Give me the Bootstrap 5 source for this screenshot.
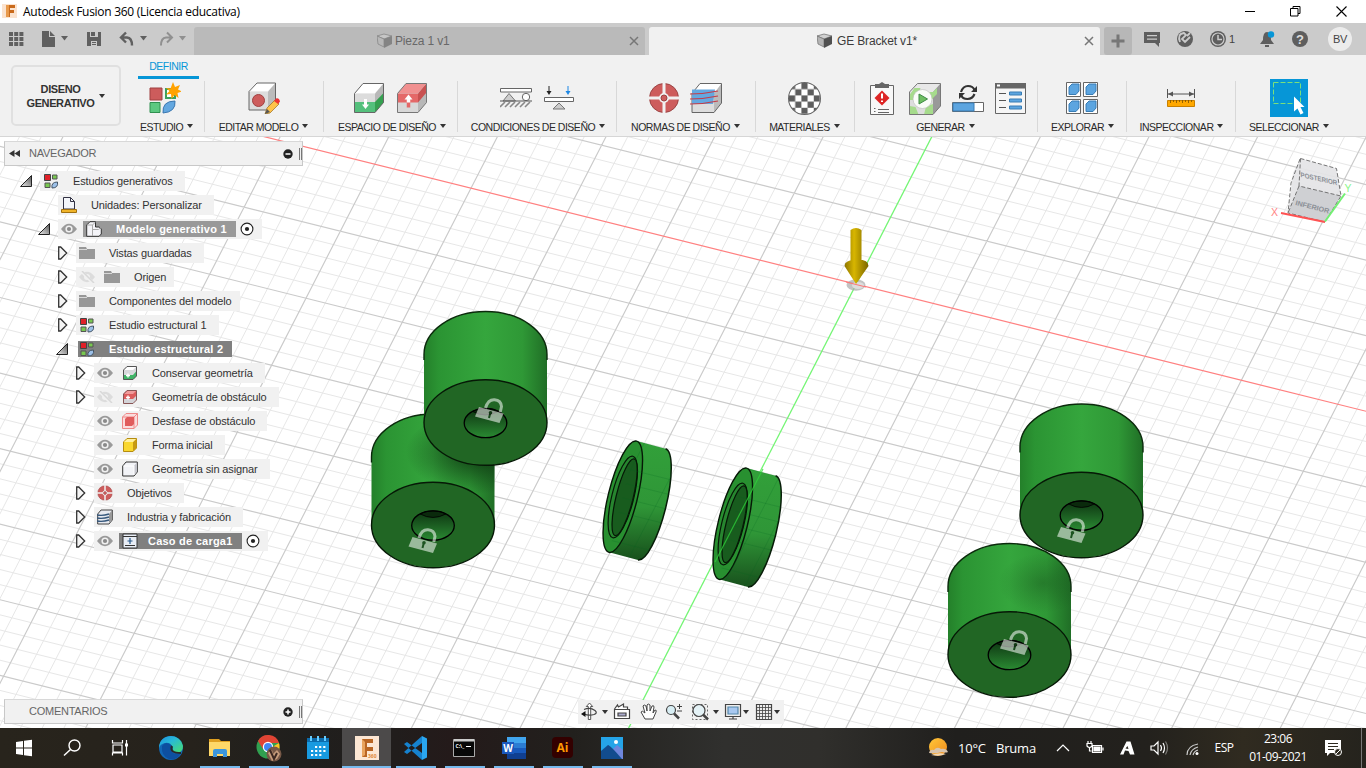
<!DOCTYPE html>
<html lang="es">
<head>
<meta charset="utf-8">
<title>Autodesk Fusion 360</title>
<link href="https://cdn.jsdelivr.net/npm/bootstrap@5.3.0/dist/css/bootstrap.min.css" rel="stylesheet">
<style>
html,body{width:1366px;height:768px;overflow:hidden}
body{font-family:"Liberation Sans",Arial,sans-serif;font-size:11px;color:#333;background:#fff;line-height:1}
svg{display:block;flex:none}
.titlebar{height:23px;background:#fff;color:#000;font:12px/23px "Open Sans","Noto Sans",sans-serif}
.titlebar .app-title{letter-spacing:-.28px;margin-left:5px}
.win-btn{width:46px;height:21px}
.tabstrip{height:32px;background:#cbcbcb;font-size:12px}
.tabstrip-right{width:222px}
.qat{width:194px}
.doc-tab{height:28px;width:451px;margin-top:4px;border-radius:3px 3px 0 0;background:#bababa;color:#686868;letter-spacing:-.15px;padding:0 6px 0 183px}
.doc-tab span{margin-left:2px}
.doc-tab.current{background:#f1f1f1;color:#3c3c3c;margin-left:4px;padding-left:168px}
.doc-tab.current span{margin-left:4px}
.plus-tab{width:28px;height:28px;margin:4px 0 0 4px;background:#b7b7b7;border-radius:3px}
.avatar{width:24px;height:24px;border-radius:50%;background:#ececec;color:#444;font-size:11px;letter-spacing:-.3px}
.ribbon{height:82px;background:#f1f1f1;border-bottom:1px solid #d6d6d6}
.workspace{width:129px}
.workspace-btn{width:110px;height:61px;margin:10px 0 0 11px;border:2px solid #e0e0e0;border-radius:5px;font-weight:700;line-height:14px;letter-spacing:-.4px;color:#333}
.workspace-btn .caret{margin-left:5px}
.tool-group{position:relative;height:81px;padding-top:22px}
.tool-group+.tool-group::before{content:"";position:absolute;left:0;top:26px;height:51px;border-left:1px solid #d8d8d8}
.tool-icons{height:42px}
.tool-label{font-size:10.5px;letter-spacing:-.5px;color:#2a2a2a;white-space:nowrap;line-height:14px;height:14px;margin-top:1px}
.caret{width:0;height:0;border:3.5px solid transparent;border-top:4.5px solid #333;border-bottom:0;display:inline-block}
.tool-label .caret{margin-left:4px;vertical-align:3px}
.g0{width:75px}.g1{width:119px}.g2{width:134px}.g3{width:159px}.g4{width:139px}.g5{width:99px}.g6{width:183px}.g7{width:89px}.g8{width:109px}.g9{width:108px}
.g0 .tool-icons{margin-left:-4px}.g6 .tool-icons{margin-left:4px}.g2 .tool-label{padding-left:4px}.g3 .tool-label{padding-left:3px}.g7 .tool-label,.g8 .tool-label{padding-left:2px}
.g2 .tool-icons{gap:11px}.g3 .tool-icons{gap:12px}.g4 .tool-icons{gap:10px}
.define-tab{position:absolute;left:9px;top:0;width:61px;height:24px;border-bottom:3px solid #0696d7;color:#0696d7;font-size:10.5px;letter-spacing:-.5px;text-align:center;line-height:23px}
.viewport{height:591px;overflow:hidden;background:#fff}
.scene{position:absolute;left:0;top:0}
.browser{width:304px;padding-top:4px}
.panel-bar{width:299px;height:25px;margin-left:4px;background:#f1f1f1;border:1px solid #c8c8c8;border-top-color:#d8d8d8;color:#666;letter-spacing:-.25px}
.browser .panel-bar{margin-bottom:5px;padding-left:4px}
.panel-bar .grip{width:3px;height:12px;border-left:1px solid #777;border-right:1px solid #777;margin-left:6px}
.panel-bar span{margin-left:9px}
.comments .panel-bar span{margin-left:24px}
.tree-row{height:20px;margin-bottom:4px}
.lv0{padding-left:20px}.lv1{padding-left:38px}.lv2{padding-left:56px}.lv3{padding-left:74px}
.twist{width:20px}
.node{height:20px;background:#f1f1f1;padding:0 12px 0 3px;color:#333;letter-spacing:-.13px}
.node .node-text{margin-left:14px;white-space:nowrap}
.eye{margin-right:9px}
.picked{height:16px;background:#808080;color:#fff;font-weight:700;letter-spacing:.23px;padding:0 9px 0 3px;margin-left:-3px}
.picked.soft{background:#999}
.picked.flush{margin-left:-1px;padding-left:1px}
.picked.load .node-text{margin-left:10px}
.comments{position:absolute;left:0;top:562px}
.navtools{position:absolute;left:578px;top:563px;width:206px;height:24px;background:#f1f1f1}
.taskbar{height:40px;background:linear-gradient(90deg,#28241c 0,#26221c 14%,#201f1d 22%,#211d1c 29%,#241a1a 33%,#22201d 42%,#30302e 53%,#302f2c 60%,#201f1d 70%,#23211d 84%,#302b20 91%,#25231d 100%);color:#fff;font-family:"Open Sans","Noto Sans",sans-serif}
.tb{width:49px;height:40px;position:relative}
.tb.sys{width:48px}
.tb.first{margin-left:2px}
.tb.run::after{content:"";position:absolute;left:4.5px;right:4.5px;bottom:0;height:2px;background:#76b9ed}
.tb.on{background:#4c4a4a}.tb.on::after{left:0;right:0}
.tray{width:438px;font-size:12px}
.tray .temp{width:38px;margin-left:9px;font-size:13px;letter-spacing:-.2px}
.tray .sky{width:52px;font-size:13px;letter-spacing:-.2px}
.tray .lang{width:32px;text-align:center;letter-spacing:-.5px}
.tray .clock{width:76px;line-height:18px;letter-spacing:-.5px}
.tray .peek{margin-left:11px}
</style>
</head>
<body>
<svg width="0" height="0" class="position-absolute">
<defs>
<linearGradient id="side" x1="0" x2="1"><stop offset="0" stop-color="#24802a"/><stop offset=".12" stop-color="#2b9433"/><stop offset=".5" stop-color="#35a63d"/><stop offset=".8" stop-color="#2f9836"/><stop offset="1" stop-color="#206e26"/></linearGradient>
<linearGradient id="bore" x1="0" y1="0" x2="0" y2="1"><stop offset="0" stop-color="#0c3410"/><stop offset=".5" stop-color="#1c5e22"/><stop offset="1" stop-color="#2a8a32"/></linearGradient>
<linearGradient id="ring" x1="0" y1="0" x2="0" y2="1"><stop offset="0" stop-color="#32a03a"/><stop offset=".55" stop-color="#2f9637"/><stop offset="1" stop-color="#18501c"/></linearGradient>
<linearGradient id="gold"><stop offset="0" stop-color="#8c7400"/><stop offset=".4" stop-color="#d8b600"/><stop offset="1" stop-color="#7a6500"/></linearGradient>
<radialGradient id="shade"><stop offset="0" stop-color="#08240a" stop-opacity=".85"/><stop offset="1" stop-color="#0c3410" stop-opacity="0"/></radialGradient>
<linearGradient id="tri" x1="0" y1="1" x2="1" y2="0"><stop offset="0" stop-color="#eee"/><stop offset="1" stop-color="#555"/></linearGradient>
<linearGradient id="edgeg" x1="0" y1="0" x2="1" y2="1"><stop offset="0" stop-color="#1d8fe0"/><stop offset=".4" stop-color="#28b8d8"/><stop offset="1" stop-color="#4be06a"/></linearGradient>
<linearGradient id="sun" x1="0" y1="0" x2="1" y2="1"><stop offset="0" stop-color="#ffc83a"/><stop offset="1" stop-color="#f08a1c"/></linearGradient>
<pattern id="check" width="12" height="12" patternUnits="userSpaceOnUse" x="1" y="1"><rect width="12" height="12" fill="#fff"/><path d="M0 0h6v6H0zM6 6h6v6H6z" fill="#5e5e5e"/></pattern>
<symbol id="open" viewBox="0 0 12 12"><path d="M11.5.5V11.5H.5z" fill="url(#tri)" stroke="#222"/></symbol>
<symbol id="shut" viewBox="0 0 12 14"><path d="M2.700 1h2l6 6-6 6h-2z" fill="#f4f4f4" stroke="#333" stroke-width="1.3"/></symbol>
<symbol id="eye" viewBox="0 0 16 12"><path d="M0 6Q4 .8 8 .8T16 6Q12 11.2 8 11.2T0 6z" fill="#9a9a9a"/><circle cx="8" cy="6" r="3.6" fill="#f1f1f1"/><circle cx="8" cy="6" r="2.1" fill="#8a8a8a"/></symbol>
<symbol id="noeye" viewBox="0 0 16 12"><path d="M0 6Q4 .8 8 .8T16 6Q12 11.2 8 11.2T0 6z" fill="#dcdcdc"/><circle cx="8" cy="6" r="3" fill="#f1f1f1"/><path d="M2 0l12 12" stroke="#f1f1f1" stroke-width="3"/><path d="M3 0l12 12" stroke="#d8d8d8" stroke-width="1.5"/></symbol>
<symbol id="folder" viewBox="0 0 16 14"><path d="M0 1h7l1 2h8v10H0z" fill="#989898"/><path d="M0 3.5h8" stroke="#d8d8d8"/></symbol>
<symbol id="study" viewBox="0 0 16 16"><path d="M1.500 1.500h6v6h-6z" fill="#e02028" stroke="#444"/><path d="M9.500 2h4.500v4H9.500z" fill="#78c850" stroke="#555"/><path d="M2 10h5v4.500H2z" fill="#78c850" stroke="#555"/><path d="M9 15q-1-6 5.500-6 1 6-5.500 6z" fill="#9cc0e8" stroke="#456"/></symbol>
<symbol id="radio" viewBox="0 0 14 14"><circle cx="7" cy="7" r="5.900" fill="#fff" stroke="#222" stroke-width="1.100"/><circle cx="7" cy="7" r="2.100" fill="#222"/></symbol>
<symbol id="cgreen" viewBox="0 0 32 32"><path d="M1.500 11.500L10 1.500h20.500L22 11.500z" fill="#fff"/><path d="M22 11.500L30.500 1.500v19L22 30.500z" fill="#b8b8b8"/><path d="M1.500 11.500H22v9H1.500z" fill="#dcdcdc"/><path d="M1.500 20H22v10.500H1.500z" fill="#54c07c"/><path d="M22 20l8.500-9v9.500L22 30.500z" fill="#35a050"/><path d="M1.500 11.500L10 1.500h20.500v19L22 30.500H1.500z" fill="none" stroke="#666"/><path d="M12.500 17v7" stroke="#fff" stroke-width="3"/><path d="M9 22.500h7L12.500 27z" fill="#fff"/></symbol>
<symbol id="cred" viewBox="0 0 32 32"><path d="M1.500 11.500L10 1.500h20.500L22 11.500z" fill="#f09090"/><path d="M22 11.500L30.500 1.500v19L22 30.500z" fill="#b8b8b8"/><path d="M1.500 11.500H22v19H1.500z" fill="#d8d8d8"/><path d="M1.500 11.500H22v9H1.500z" fill="#e46868"/><path d="M22 11.500l8.500-10v9L22 20.500z" fill="#c85050"/><path d="M1.500 11.500L10 1.500h20.500v19L22 30.500H1.500z" fill="none" stroke="#777"/><path d="M12.500 20v5.500" stroke="#e46868" stroke-width="3.500"/><path d="M12.500 20.500V16" stroke="#fff" stroke-width="3.500"/><path d="M8.500 17.500h8L12.500 12.500z" fill="#fff"/></symbol>
<symbol id="sgreen" viewBox="0 0 16 16"><path d="M1.500 5L5 1.500h9.500V11L11 14.500H1.500z" fill="#d8d8dc"/><path d="M2 5l3.500-3H14l-3 3z" fill="#fff"/><path d="M1.500 10H11l3.500-4v5L11 14.500H1.500z" fill="#3fb466"/><path d="M1.500 5L5 1.500h9.500V11L11 14.500H1.500z" fill="none" stroke="#555"/><path d="M6 8.500v4M4 10.500h4" stroke="#fff" stroke-width="1.400"/></symbol>
<symbol id="sred" viewBox="0 0 16 16"><path d="M1.500 5L5 1.500h9.500V11L11 14.500H1.500z" fill="#d4d4d8"/><path d="M1.500 5L5 1.500h9.500v5L11 10H1.500z" fill="#dc5c5c"/><path d="M2 5l3.500-3H14l-3 3z" fill="#f09a9a"/><path d="M1.500 5L5 1.500h9.500V11L11 14.500H1.500z" fill="none" stroke="#855"/><path d="M6 6.500v4M4 8.500h4" stroke="#fff" stroke-width="1.400"/></symbol>
<symbol id="target" viewBox="0 0 32 32"><circle cx="16" cy="16" r="14.500" fill="#cd5c5c" stroke="#9b4444"/><path d="M16 0v32M0 16h32" stroke="#f1f1f1" stroke-width="3"/><circle cx="16" cy="16" r="5" fill="#f1f1f1"/><circle cx="16" cy="16" r="3" fill="#cd5c5c" stroke="#9b4444"/></symbol>
<symbol id="fab" viewBox="0 0 34 32"><path d="M2 11.500L10 1.500h21.500L24 11.500z" fill="#fff"/><path d="M24 11.500l7.500-10V21L24 30.500z" fill="#bbb"/><path d="M2 11.500h22v19H2z" fill="#ddd"/><path d="M2 11.500L10 1.500h21.500V21L24 30.500H2z" fill="none" stroke="#666"/><path d="M2 7.500h23L23 22H2z" fill="#64a8e0"/><path d="M0 12q14 0 28-3M0 17q14 0 28-3M0 22q14 0 28-3" stroke="#c43c48" fill="none" stroke-width="1.200"/></symbol>
<symbol id="cylinder" viewBox="0 0 126 158" overflow="visible"><path d="M1.500 44.500A61.500 43 0 0 1 124.500 44.500V112H1.500z" fill="url(#side)"/><path d="M1.500 50v-5.500A61.500 43 0 0 1 124.500 44.500V50" fill="none" stroke="#0b2a0c" stroke-width="1.400"/></symbol>
<symbol id="face" viewBox="0 0 126 158" overflow="visible"><ellipse cx="63" cy="112.500" rx="61.500" ry="42.800" fill="#216624" stroke="#061806" stroke-width="1.400"/><ellipse cx="63" cy="113" rx="21.300" ry="14.700" fill="url(#bore)"/><path d="M50 101.400A21.300 14.700 0 0 1 76 101.400Q63 108.500 50 101.400z" fill="#0a2a0c" stroke="#000" stroke-width=".8"/><ellipse cx="63" cy="113" rx="21.300" ry="14.700" fill="none" stroke="#000" stroke-width="1.300"/></symbol>
<symbol id="lock" viewBox="0 0 30 30" overflow="visible"><path d="M10.500 10.500Q13 1.800 19.500 2.200T26.500 9L25.300 14.500" fill="none" stroke="#fff" stroke-width="3"/><path d="M4 9.500l24.500 6.500-4 9.500L0 19z" fill="#fff"/><path d="M15.300 15.500l-1.300 5" stroke="#1d4720" stroke-width="2"/><circle cx="15.500" cy="15.300" r="1.800" fill="#1d4720"/></symbol>
<g id="ringpart"><path d="M636.600 441.100l29 7.700A14.600 57.300 13.900 0 1 638 560l-29-7.700z" fill="url(#ring)"/><path d="M665.600 448.800A14.600 57.300 13.900 0 1 638 560" fill="none" stroke="#071c08" stroke-width="1.500"/><ellipse cx="622.800" cy="496.700" rx="14.600" ry="57.300" transform="rotate(13.900 622.800 496.700)" fill="#289030" stroke="#061806" stroke-width="1.400"/><ellipse cx="622.800" cy="497" rx="11" ry="42" transform="rotate(13.900 622.800 497)" fill="#27852f" stroke="#061806" stroke-width="1.200"/><ellipse cx="624.600" cy="497.300" rx="8.500" ry="39.500" transform="rotate(13.900 624.600 497.300)" fill="#185c1e" stroke="#061806" stroke-width="1.200"/></g>
<clipPath id="clipB"><path d="M371.500 457A61.500 43 0 0 1 494.500 457V525H371.500z"/></clipPath>
<clipPath id="clipD"><path d="M948 587A61.500 43 0 0 1 1071 587V655H948z"/></clipPath>
<clipPath id="clipR"><path d="M636.600 441.100l29 7.700A14.600 57.300 13.900 0 1 638 560l-29-7.700zM746.600 468.100l29 7.700A14.600 57.300 13.900 0 1 748 587l-29-7.700z"/></clipPath>
<symbol id="close" viewBox="0 0 10 10"><path d="M1 1l8 8M9 1L1 9" stroke="#777" stroke-width="1.500"/></symbol>
</defs></svg>

<header class="titlebar d-flex">
<svg width="18" height="20" viewBox="0 0 18 20"><path d="M2 4h15v14H2z" fill="#fbe3cf"/><path d="M7 5h8v3h-5v2h4v3h-4v4H7z" fill="#c96a1c"/><path d="M6 5h3v12H6z" fill="#e89a4c"/></svg>
<span class="app-title">Autodesk Fusion 360 (Licencia educativa)</span>
<div class="ms-auto d-flex me-1 pe-1 align-items-center">
<svg class="win-btn" viewBox="0 0 46 21"><path d="M25 10.500h10" stroke="#000"/></svg>
<svg class="win-btn" viewBox="0 0 46 21"><path d="M24.500 7.500h7.500v7.500h-7.500zM27 7.500v-2h7v7h-2" fill="none" stroke="#000"/></svg>
<svg class="win-btn" viewBox="0 0 46 21"><path d="M24.500 5.500l10 10m0-10l-10 10" stroke="#000" stroke-width="1.100"/></svg>
</div>
</header>

<nav class="tabstrip d-flex">
<svg class="qat" height="32" viewBox="0 0 194 32"><g fill="#606060"><path d="M9 9h4v4H9zM14.200 9h4v4h-4zM19.400 9h4v4h-4zM9 14h4v4H9zM14.200 14h4v4h-4zM19.400 14h4v4h-4zM9 19h4v4H9zM14.200 19h4v4h-4zM19.400 19h4v4h-4z"/><path d="M42 8h7v6h6v10H42zM50 8l5 5h-5z"/><path d="M61 13h7l-3.500 4.500z"/><path d="M87 9h14v14H87zm3 0v5h8V9zm1 9v5h6v-5z" fill-rule="evenodd"/><path d="M91 9h4v4h-4zM92 19h4v1h-4zM92 21h4v1h-4z"/><path d="M140 13h7l-3.500 4.500z"/></g><path d="M126 9.500l-5 5 5 5M121 14.500h6q5 .5 5 8" fill="none" stroke="#606060" stroke-width="2.400"/><g opacity=".55"><path d="M167 9.500l5 5-5 5M172 14.500h-6q-5 .5-5 8" fill="none" stroke="#606060" stroke-width="2"/><path d="M179 13h7l-3.500 4.500z" fill="#606060"/></g></svg>
<div class="doc-tab d-flex align-items-center"><svg width="16" height="16"><path d="M0 3l7-2 8 2-8 3z" fill="#c6c6c6" stroke="#888" stroke-width=".8"/><path d="M0 3l7 3v8L1 11z" fill="#b8b8b8" stroke="#888" stroke-width=".8"/><path d="M7 6l8-3v8l-8 4z" fill="#848484"/></svg><span>Pieza 1 v1</span><svg class="ms-auto" width="10" height="10"><use href="#close"/></svg></div>
<div class="doc-tab current d-flex align-items-center"><svg width="16" height="16"><path d="M0 3l7-2 8 2-8 3z" fill="#d0d0d0" stroke="#777" stroke-width=".8"/><path d="M0 3l7 3v8L1 11z" fill="#b4b4b4" stroke="#777" stroke-width=".8"/><path d="M7 6l8-3v8l-8 4z" fill="#505050"/></svg><span>GE Bracket v1*</span><svg class="ms-auto" width="10" height="10"><use href="#close"/></svg></div>
<div class="plus-tab d-flex align-items-center justify-content-center"><svg width="14" height="14"><path d="M7 .500v13M.500 7h13" stroke="#777" stroke-width="3"/></svg></div>
<div class="tabstrip-right d-flex align-items-center ms-auto">
<svg width="184" height="32" viewBox="1144 23 184 32"><g fill="#5e5e5e"><path d="M1144 32h16v11h-1v4l-4-4h-11z"/><path d="M1147 35h10v1.300h-10zM1147 38.500h10v1.300h-10z" fill="#cbcbcb"/><circle cx="1185" cy="39" r="8"/><path d="M1180 42q-3-8 4-9l2 2-4 4 3 3 5-5M1187 36l3-3" stroke="#cbcbcb" stroke-width="1.800" fill="none"/><circle cx="1218" cy="39" r="8"/><circle cx="1218" cy="39" r="6" fill="none" stroke="#cbcbcb" stroke-width="1.200"/><path d="M1218 35v4.500h4" stroke="#cbcbcb" stroke-width="1.500" fill="none"/><text x="1229" y="43" font-size="11" fill="#444">1</text><path d="M1260 44l3-4q0-8 4-8t4 8l3 4zM1265 45h4v2h-4z"/><circle cx="1300" cy="39" r="8"/></g><circle cx="1271" cy="34.500" r="3.200" fill="#0696d7"/><text x="1300" y="43.500" font-size="13" font-weight="700" fill="#ddd" text-anchor="middle">?</text></svg>
<div class="avatar d-flex align-items-center justify-content-center">BV</div></div>
</nav>

<section class="ribbon d-flex">
<div class="workspace"><div class="workspace-btn d-flex align-items-center justify-content-center text-center"><div>DISENO<br>GENERATIVO</div><i class="caret"></i></div></div>
<div class="tool-group g0 text-center"><div class="define-tab">DEFINIR</div><div class="tool-icons d-flex justify-content-center align-items-center"><svg width="32" height="32" viewBox="0 0 32 32"><path d="M1 6h12v12H1z" fill="#cd5c5c" stroke="#a04040"/><path d="M17 7h9v9h-9z" fill="#fff" stroke="#3ca05c" stroke-width="2"/><path d="M1 20.500h10v10H1z" fill="#5cc880" stroke="#309050"/><path d="M14 31Q13 19 26 19q1 11-12 12z" fill="#64a8e0" stroke="#3c78b0"/><path d="M24 0l2 5 5-2-2 4.500 4 2-4.500 1.500 1 5-4-3-3 4-.5-5-5 .5 3.500-3.500-3.500-3 4.500.500z" fill="#ffa200"/></svg></div><div class="tool-label">ESTUDIO<i class="caret"></i></div></div>
<div class="tool-group g1 text-center"><div class="tool-icons d-flex justify-content-center align-items-center"><svg width="32" height="32" viewBox="0 0 32 32"><path d="M1 9.500L9 1h18.500L20 9.500z" fill="#fff"/><path d="M20 9.500L27.500 1v19L20 28z" fill="#bbb"/><path d="M1 9.500h19V28H1z" fill="#ddd"/><path d="M1 9.500L9 1h18.500v19L20 28H1z" fill="none" stroke="#666"/><circle cx="10.500" cy="18.500" r="6" fill="#cd5c5c" stroke="#a04040"/><path d="M17 32l2-6 8-8 4 4-9 9z" fill="#ffc34a" stroke="#9a6b20" stroke-width=".7"/><path d="M26 19l2-2.500q3-1 4 3L30 22z" fill="#e33"/><path d="M17 32l2-5 3 3z" fill="#555"/></svg></div><div class="tool-label">EDITAR MODELO<i class="caret"></i></div></div>
<div class="tool-group g2 text-center"><div class="tool-icons d-flex justify-content-center align-items-center"><svg width="32" height="32"><use href="#cgreen"/></svg><svg width="32" height="32"><use href="#cred"/></svg></div><div class="tool-label">ESPACIO DE DISEÑO<i class="caret"></i></div></div>
<div class="tool-group g3 text-center"><div class="tool-icons d-flex justify-content-center align-items-center"><svg width="32" height="22" viewBox="0 0 32 22"><path d="M.500 1.500h31v3.500H.500z" fill="#fff" stroke="#666"/><path d="M3 14l6-7.500L15.500 14z" fill="#ccc" stroke="#777"/><circle cx="26" cy="10" r="3.700" fill="#fff" stroke="#666"/><path d="M0 14h32" stroke="#555"/><path d="M0 20l5-5M5 20l5-5M10 20l5-5M15 20l5-5M20 20l5-5M25 20l5-5" stroke="#888" stroke-width="1.600"/></svg><svg width="30" height="28" viewBox="0 0 30 28"><path d="M.500 13.500h29v4H.500z" fill="#fff" stroke="#666"/><path d="M15 19l-6 6h12z" fill="#ccc" stroke="#777"/><path d="M5 2v6" stroke="#222"/><path d="M2.500 7h5L5 11z" fill="#222"/><path d="M24 2v6" stroke="#1e88e5"/><path d="M21.500 7h5L24 11z" fill="#1e88e5"/></svg></div><div class="tool-label">CONDICIONES DE DISEÑO<i class="caret"></i></div></div>
<div class="tool-group g4 text-center"><div class="tool-icons d-flex justify-content-center align-items-center"><svg width="32" height="32"><use href="#target"/></svg><svg width="34" height="32"><use href="#fab"/></svg></div><div class="tool-label">NORMAS DE DISEÑO<i class="caret"></i></div></div>
<div class="tool-group g5 text-center"><div class="tool-icons d-flex justify-content-center align-items-center"><svg width="33" height="33" viewBox="0 0 32 32"><circle cx="16" cy="16" r="15.500" fill="url(#check)" stroke="#666"/></svg></div><div class="tool-label">MATERIALES<i class="caret"></i></div></div>
<div class="tool-group g6 text-center"><div class="tool-icons d-flex justify-content-center align-items-center"><svg width="156" height="34" viewBox="870 80 156 34"><path d="M870.500 84.500h23v29h-23z" fill="#f8f8f8" stroke="#666"/><path d="M875 83h4l3-2 3 2h4v4h-14z" fill="#666"/><path d="M882 89.500l7.500 7.500-7.500 7.500-7.500-7.500z" fill="#dd2525"/><path d="M882 92.500v5m0 2v1.500" stroke="#fff" stroke-width="2"/><path d="M878 108.500h11m-11 3h11M874 107.500h1.500m-1.500 3h1.500" stroke="#666"/><path d="M909.500 91l8-8.500h23L933 91z" fill="#e8e8e8"/><path d="M933 91l7.500-8.500V105l-7.500 8.500z" fill="#999"/><path d="M909.500 91H933v22.500h-23.500z" fill="#ddd"/><path d="M909.500 94l5-7h6l-2 7-2 5h-7zM926 91h7v7l-5-1zM909.500 105l6 1 3 7.500h-9zM933 103v10.500h-9l2-8zM933 91l4-4v6l-4 4z" fill="#a6db8c"/><path d="M909.500 91l8-8.500h23V105l-7.500 8.500h-23.500z" fill="none" stroke="#777"/><circle cx="922.500" cy="98" r="9.500" fill="#fafdf8" stroke="#bbb" stroke-width=".6"/><path d="M919 93l8.500 5-8.500 5z" fill="#6fbf62" stroke="#3f8b45"/><path d="M961 91q2-6 7-6t6.500 4M974.500 93q-2 5-7 5t-6-3.500" stroke="#333" stroke-width="2.200" fill="none"/><path d="M977 85v6h-6zM959 98v-6h6z" fill="#333"/><path d="M952.500 101.500h31v9h-31z" fill="#fff" stroke="#666"/><path d="M953 102h21v8h-21z" fill="#5ca5e0" stroke="#387db5"/><path d="M995.500 82.500h30v30h-30z" fill="#f6f6f6" stroke="#666"/><path d="M995 82h31v5.500h-31z" fill="#666"/><path d="M997 83.500h3v2h-3z" fill="#fff"/><path d="M999 92.500h7m-7 7h7m-7 7h7" stroke="#555"/><path d="M1009.500 91h12v3h-12zM1009.500 98h12v3h-12zM1009.500 105h12v3h-12z" fill="#5ca5e0" stroke="#387db5"/></svg></div><div class="tool-label">GENERAR<i class="caret"></i></div></div>
<div class="tool-group g7 text-center"><div class="tool-icons d-flex justify-content-center align-items-center"><svg width="32" height="32" viewBox="0 0 32 32"><defs><g id="var"><path d="M.500.500h14v14H.500z" fill="#fff" stroke="#666"/><path d="M3 5l3-3h7v7l-3 3.500H3z" fill="#5ca5e0" stroke="#387db5"/></g></defs><use href="#var"/><use href="#var" x="17"/><use href="#var" y="17"/><use href="#var" x="17" y="17"/></svg></div><div class="tool-label">EXPLORAR<i class="caret"></i></div></div>
<div class="tool-group g8 text-center"><div class="tool-icons d-flex justify-content-center align-items-center"><svg width="30" height="18" viewBox="0 0 30 18"><path d="M1.500 0v9M28.500 0v9M2 5h26" stroke="#555"/><path d="M2 5l5-2.500v5zM28 5l-5-2.500v5z" fill="#555"/><path d="M1.500 11.500h27v6h-27z" fill="#ffa800" stroke="#c88000"/><path d="M4.500 11v3m3-3v2m3-2v3m3-3v2m3-2v3m3-3v2m3-2v3m3-3v2" stroke="#7a5000" stroke-width=".8"/></svg></div><div class="tool-label">INSPECCIONAR<i class="caret"></i></div></div>
<div class="tool-group g9 text-center"><div class="tool-icons d-flex justify-content-center align-items-center"><svg width="38" height="38" viewBox="0 0 38 38"><path d="M0 0h38v38H0z" fill="#0696d7"/><path d="M3.500 3.500h27v21h-27z" fill="none" stroke="#7be07b" stroke-dasharray="5 2"/><path d="M24 17.500v15l3.500-3 3 6 3-1.500-3-6h4z" fill="#fff"/></svg></div><div class="tool-label">SELECCIONAR<i class="caret"></i></div></div>
</section>

<main class="viewport position-relative">
<svg class="scene" width="1366" height="591" viewBox="0 137 1366 591">
<path id="minor" fill="none" stroke="#e7e7e7" stroke-width="1"/>
<path id="major" fill="none" stroke="#cacaca" stroke-width="1.150"/>
<path id="axis-x" stroke="#ff8080" stroke-width="1.200"/>
<path id="axis-y" stroke="#74f574" stroke-width="1.300"/>
<ellipse cx="856" cy="285" rx="9.500" ry="5.800" fill="#aaa" opacity=".7"/><ellipse cx="858" cy="285.500" rx="6" ry="3.400" fill="#ddd"/>
<path d="M846 282l20 5" stroke="#f77"/>
<path d="M850.500 230q5.500-4 11 0v31h-11zM844.500 266q0-6 12-6.500t12 6.500L856 284z" fill="url(#gold)"/>
<use href="#cylinder" x="370" y="412.500" width="126" height="158"/>
<ellipse cx="478" cy="452" rx="72" ry="42" fill="url(#shade)" clip-path="url(#clipB)"/>
<use href="#face" x="370" y="412.500" width="126" height="158"/>
<use href="#cylinder" x="422.500" y="310" width="126" height="158"/><use href="#face" x="422.500" y="310" width="126" height="158"/>
<use href="#cylinder" x="946.500" y="542" width="126" height="158"/><ellipse cx="1043" cy="583" rx="45" ry="30" fill="url(#shade)" opacity=".3" clip-path="url(#clipD)"/>
<use href="#face" x="946.500" y="542" width="126" height="158"/>
<use href="#cylinder" x="1018.500" y="402.500" width="126" height="158"/><use href="#face" x="1018.500" y="402.500" width="126" height="158"/>
<g opacity=".55"><use href="#lock" x="475" y="397.500" width="30" height="30"/><use href="#lock" x="408.500" y="527.500" width="30" height="30"/><use href="#lock" x="1057" y="517.500" width="30" height="30"/><use href="#lock" x="1000" y="629.500" width="30" height="30"/></g>
<use href="#ringpart"/><use href="#ringpart" x="110" y="27"/>
<g clip-path="url(#clipR)" opacity=".2"><path id="ghost" fill="none" stroke="#062"/></g>
<path d="M763 469L715 562" stroke="#2fd23a" stroke-width="1.200" opacity=".75"/>
<path d="M1300.500 158.500l36 10 4.500 27.500-16 26-37-9 5-40z" fill="#e4e4e6" opacity=".93"/><path d="M1299 186l42 10-16 26-37-9z" fill="#cfd0d3"/>
<path d="M1300.500 158.500l36 10 4.500 27.500-42-10zM1299 186l-11 27M1300 159l-9 24-3 30 37 9 16-26" fill="none" stroke="#666" stroke-width=".9" stroke-dasharray="4 2"/>
<g font-size="7" font-weight="700" fill="#8b8f96"><text transform="matrix(.97 .22 .05 1 1300.500 177)" textLength="38" lengthAdjust="spacingAndGlyphs">POSTERIOR</text><text transform="matrix(.96 .24 -.25 .97 1295 205)" textLength="35" lengthAdjust="spacingAndGlyphs">INFERIOR</text></g>
<path d="M1281 213l44 9" stroke="#ff5252" stroke-width="2"/><path d="M1325 221.500l20-28" stroke="#72f072" stroke-width="2"/>
<text x="1271" y="216" font-size="11" fill="#ff8585" textLength="7" lengthAdjust="spacingAndGlyphs">X</text><text x="1344.500" y="192" font-size="11" fill="#8af58a" textLength="7" lengthAdjust="spacingAndGlyphs">Y</text>
</svg>

<aside class="browser position-relative">
<div class="panel-bar d-flex align-items-center"><svg width="11" height="8"><path d="M5.500 0v7L0 3.500zM11 0v7L5.500 3.500z" fill="#333"/></svg><span>NAVEGADOR</span><svg class="ms-auto" width="10" height="10"><circle cx="5" cy="5" r="4.700" fill="#222"/><path d="M2.500 5h5" stroke="#fff" stroke-width="1.500"/></svg><i class="grip"></i></div>
<div class="tree-row lv0 d-flex align-items-center"><span class="twist"><svg width="12" height="12"><use href="#open"/></svg></span><div class="node d-flex align-items-center"><svg width="16" height="16"><use href="#study"/></svg><span class="node-text">Estudios generativos</span></div></div>
<div class="tree-row lv1 d-flex align-items-center"><span class="twist"></span><div class="node d-flex align-items-center"><svg width="16" height="18" viewBox="0 0 16 18"><path d="M2.500 1.500h7l4 4V13h-11z" fill="#f4f6fa" stroke="#334"/><path d="M9.500 1.500v4h4" fill="none" stroke="#334"/><path d="M.500 13.500h15v3H.500z" fill="#f0b429" stroke="#a07010"/></svg><span class="node-text">Unidades: Personalizar</span></div></div>
<div class="tree-row lv1 d-flex align-items-center"><span class="twist"><svg width="12" height="12"><use href="#open"/></svg></span><div class="node d-flex align-items-center pe-2"><svg class="eye" width="16" height="12"><use href="#eye"/></svg><div class="picked soft d-flex align-items-center"><svg width="16" height="16" viewBox="0 0 16 16"><path d="M.700 4L4 .700h5.500V6h3.800l2 2v5L13 15.300H.700z" fill="#f4f4f8" stroke="#333"/><path d="M6.500 4v11M1 4h5.500L9 1.500M6.500 8.500H12.500L15 6.500" stroke="#aaa" fill="none"/></svg><span class="node-text">Modelo generativo 1</span></div><svg class="ms-1" width="14" height="14"><use href="#radio"/></svg></div></div>
<div class="tree-row lv2 d-flex align-items-center"><span class="twist"><svg width="12" height="14"><use href="#shut"/></svg></span><div class="node d-flex align-items-center"><svg width="16" height="14"><use href="#folder"/></svg><span class="node-text">Vistas guardadas</span></div></div>
<div class="tree-row lv2 d-flex align-items-center"><span class="twist"><svg width="12" height="14"><use href="#shut"/></svg></span><div class="node d-flex align-items-center pe-2"><svg class="eye" width="16" height="12"><use href="#noeye"/></svg><svg width="16" height="14"><use href="#folder"/></svg><span class="node-text">Origen</span></div></div>
<div class="tree-row lv2 d-flex align-items-center"><span class="twist"><svg width="12" height="14"><use href="#shut"/></svg></span><div class="node d-flex align-items-center pe-2"><svg width="16" height="14"><use href="#folder"/></svg><span class="node-text">Componentes del modelo</span></div></div>
<div class="tree-row lv2 d-flex align-items-center"><span class="twist"><svg width="12" height="14"><use href="#shut"/></svg></span><div class="node d-flex align-items-center"><svg width="16" height="16"><use href="#study"/></svg><span class="node-text">Estudio estructural 1</span></div></div>
<div class="tree-row lv2 d-flex align-items-center"><span class="twist"><svg width="12" height="12"><use href="#open"/></svg></span><div class="node bg-transparent d-flex align-items-center"><div class="picked flush d-flex align-items-center"><svg width="16" height="16"><use href="#study"/></svg><span class="node-text">Estudio estructural 2</span></div></div></div>
<div class="tree-row lv3 d-flex align-items-center"><span class="twist"><svg width="12" height="14"><use href="#shut"/></svg></span><div class="node d-flex align-items-center"><svg class="eye" width="16" height="12"><use href="#eye"/></svg><svg width="16" height="16"><use href="#sgreen"/></svg><span class="node-text">Conservar geometría</span></div></div>
<div class="tree-row lv3 d-flex align-items-center"><span class="twist"><svg width="12" height="14"><use href="#shut"/></svg></span><div class="node d-flex align-items-center"><svg class="eye" width="16" height="12"><use href="#noeye"/></svg><svg width="16" height="16"><use href="#sred"/></svg><span class="node-text">Geometría de obstáculo</span></div></div>
<div class="tree-row lv3 d-flex align-items-center"><span class="twist"></span><div class="node d-flex align-items-center"><svg class="eye" width="16" height="12"><use href="#eye"/></svg><svg width="16" height="16" viewBox="0 0 16 16"><path d="M.500 4L4 .500h11.500V12L12 15.500H.500zM.500 4H12v11.500M12 4L15.500.500" fill="#fbdcdc" stroke="#e88"/><path d="M3 6l2-2h7v7l-2 2H3z" fill="#e05c5c"/></svg><span class="node-text">Desfase de obstáculo</span></div></div>
<div class="tree-row lv3 d-flex align-items-center"><span class="twist"></span><div class="node d-flex align-items-center"><svg class="eye" width="16" height="12"><use href="#eye"/></svg><svg width="16" height="16" viewBox="0 0 16 16"><path d="M1.500 5L5 1.500h9.500V11L11 14.500H1.500z" fill="#f9d72e" stroke="#b58c10"/><path d="M11 5l3.500-3.500V11L11 14.500z" fill="#c79a12"/><path d="M2 5l3.500-3H14l-3 3z" fill="#fff0a0"/></svg><span class="node-text">Forma inicial</span></div></div>
<div class="tree-row lv3 d-flex align-items-center"><span class="twist"></span><div class="node d-flex align-items-center"><svg class="eye" width="16" height="12"><use href="#eye"/></svg><svg width="16" height="16" viewBox="0 0 16 16"><path d="M.700 5L4 1h11.300v10L12 15H.700z" fill="#f2f3f7" stroke="#333"/><path d="M12 5l3-3.500v9L12 14z" fill="#c4c5cc"/><path d="M1.500 5H12v9" stroke="#fff" fill="none"/></svg><span class="node-text">Geometría sin asignar</span></div></div>
<div class="tree-row lv3 d-flex align-items-center"><span class="twist"><svg width="12" height="14"><use href="#shut"/></svg></span><div class="node d-flex align-items-center"><svg width="16" height="16"><use href="#target"/></svg><span class="node-text">Objetivos</span></div></div>
<div class="tree-row lv3 d-flex align-items-center"><span class="twist"><svg width="12" height="14"><use href="#shut"/></svg></span><div class="node d-flex align-items-center"><svg width="16" height="16" viewBox="0 0 16 16"><path d="M.700 5L4 1h11.300v10L12 15H.700z" fill="#e8eaf0" stroke="#444"/><path d="M12 5l3-3.500v9L12 14z" fill="#999"/><path d="M0 6q6 1 12-1M0 9q6 1 12-1M0 12q6 1 12-1" stroke="#36587c" stroke-width="1.400" fill="none"/></svg><span class="node-text">Industria y fabricación</span></div></div>
<div class="tree-row lv3 d-flex align-items-center"><span class="twist"><svg width="12" height="14"><use href="#shut"/></svg></span><div class="node d-flex align-items-center pe-2"><svg class="eye" width="16" height="12"><use href="#eye"/></svg><div class="picked load d-flex align-items-center"><svg width="16" height="16" viewBox="0 0 16 16"><path d="M1 1h14v14H1z" fill="#e8edf5" stroke="#333"/><path d="M1 3.500h14M3 12.500h10" stroke="#333"/><path d="M8 5v6M5.500 8h5" stroke="#258" stroke-width="1.200"/></svg><span class="node-text">Caso de carga1</span></div><svg class="ms-1" width="14" height="14"><use href="#radio"/></svg></div></div>
</aside>

<div class="comments"><div class="panel-bar d-flex align-items-center"><span>COMENTARIOS</span><svg class="ms-auto" width="10" height="10"><circle cx="5" cy="5" r="4.700" fill="#222"/><path d="M2.500 5h5M5 2.500v5" stroke="#fff" stroke-width="1.500"/></svg><i class="grip"></i></div></div>
<div class="navtools"><svg width="206" height="24" viewBox="578 700 206 24"><g fill="none" stroke="#444" stroke-width="1.200"><path d="M588.300 719.500v-13h-2l3.200-3.500 3.200 3.500h-2v13z" fill="#fff" stroke-width=".9"/><path d="M584 709.500q6-2.500 11 1 3 2.500-1 4-5 1.500-10-.5"/><path d="M581 714l4.500-3v6z" fill="#111" stroke="none"/><path d="M614.500 709.500h15v9h-15zM614.500 709l3-4 1 2 5-3v3h4v2" fill="#fff"/><path d="M618 713h8v3h-8z" fill="#aac"/><path d="M645 719l-4-7q1-2 4 1l-2-7q1-2 3 0l1 5v-6q1-2 3 0v6l2-5q2-1 2 1l-1 6 2-3q2 0 1 2l-3 7z" fill="#fff" stroke-width="1"/><circle cx="671" cy="710" r="4.500" fill="#d8eef4"/><path d="M674 713.500l5 5" stroke-width="2.500"/><path d="M677 706.500h5m-2.500-2.500v5M677 711h5" stroke-width="1"/><path d="M692.500 704.500h15v15h-15z" stroke-dasharray="2 2" stroke-width=".8"/><circle cx="699" cy="710.500" r="6" fill="#e4f2f6"/><path d="M703 714.500l5 5" stroke-width="2.500"/><path d="M725.500 704.500h15v12h-15z" fill="#eee"/><path d="M728 707h10v7h-10z" fill="#a8c8f0" stroke="#58a"/><path d="M729 719h8M733 717v2"/><path d="M756.500 704.500h15v15h-15z" fill="#eee"/><path d="M759.500 705v14m3-14v14m3-14v14m3-14v14M757 707.500h14m-14 3h14m-14 3h14m-14 3h14" stroke-width=".8"/></g><path d="M602 710h6l-3 4zM713 710h6l-3 4zM743 710h6l-3 4zM774 710h6l-3 4z" fill="#333"/></svg></div>
</main>

<footer class="taskbar d-flex">
<div class="tb sys"><svg width="48" height="40"><path d="M16 14l7-1v6.500h-7zM24 12.800l8-1v7.700h-8zM16 20.500h7V27l-7-1zM24 20.500h8v7.800l-8-1z" fill="#fff"/></svg></div>
<div class="tb sys"><svg width="48" height="40"><circle cx="26.500" cy="17.500" r="5.500" fill="none" stroke="#fff" stroke-width="1.400"/><path d="M22.500 21.500L16 27.500" stroke="#fff" stroke-width="1.500"/></svg></div>
<div class="tb sys"><svg width="48" height="40"><g fill="none" stroke="#fff" stroke-width="1.200"><path d="M16.500 12v3h10v-3M17 17h9v7h-9zM16.500 27.500V25h10v2.500M30.500 12v15.500"/></g><path d="M29 15.500h3v3h-3z" fill="#fff"/></svg></div>
<div class="tb first"><svg width="49" height="40"><circle cx="25" cy="20" r="12" fill="#1267b5"/><path d="M13 19C14 5 34 4 37 18q0 6-6 7-6 0-4-5-2-6-8-5-5 1-6 5z" fill="url(#edgeg)"/><path d="M16 18q4-6 10 0-3 3 1 7 4 2 8 0-4 8-12 6-8-3-7-13z" fill="#0d4fa0"/><path d="M26 18q-3 7 9 7" stroke="#28282a" stroke-width="2" fill="none"/></svg></div>
<div class="tb run"><svg width="49" height="40"><path d="M14 11h10l2 2h9v4H14z" fill="#e0a020"/><path d="M14 14h21v14H14z" fill="#ffd868"/><path d="M18 29v-6q0-2 2-2h10q2 0 2 2v6h-4v-3h-6v3z" fill="#3c96dc"/></svg></div>
<div class="tb run"><svg width="49" height="40"><circle cx="24" cy="19" r="11.500" fill="#30a050"/><path d="M14 13a11.500 11.500 0 0 1 21 2H24l-5 6z" fill="#e04434"/><path d="M35 15a11.500 11.500 0 0 1-9 15l4-12z" fill="#fbc524"/><circle cx="24" cy="19" r="5.200" fill="#fff"/><circle cx="24" cy="19" r="4" fill="#4286f4"/><circle cx="30" cy="26" r="7.500" fill="#765847"/><path d="M24 25l4-3 1 4 4-4 3 4-3 5-5 2z" fill="#c59b7b"/><path d="M26 22l4 9 3-6" stroke="#3b2822" stroke-width="2" fill="none"/></svg></div>
<div class="tb"><svg width="49" height="40"><path d="M14 10h22v21H14z" fill="#189ae0"/><path d="M14 10h22v4H14z" fill="#0b6bab"/><path d="M18 8v5M25 8v5M32 8v5" stroke="#6cf" stroke-width="2"/><g stroke="#fff" stroke-width="2.200" stroke-dasharray="2.200 1.900"><path d="M22 19h11M18 23h15M18 27h11"/></g></svg></div>
<div class="tb run on"><svg width="49" height="40"><path d="M13 8h24v24H13z" fill="#fce6d3"/><path d="M20 11h11v4h-6v4h6v4h-6v6h-5z" fill="#b96522"/><path d="M20 11l3 3v13l-3 2z" fill="#e9a45e"/><text x="26" y="30" font-size="5" font-weight="700" fill="#e08a3a">360</text></svg></div>
<div class="tb run"><svg width="49" height="40"><path d="M31 8l5 2.500v19L31 32z" fill="#2aa6f0"/><path d="M31 8v7L16 26l-3-2zM31 32v-7L16 14l-3 2z" fill="#1682cf"/></svg></div>
<div class="tb run"><svg width="49" height="40"><path d="M13.500 11.500h21v17h-21z" fill="#080808" stroke="#aaa"/><path d="M14 11h20v2.500H14z" fill="#ccc"/><text x="15.500" y="19.500" font-size="5" font-weight="700" fill="#fff">C:\_</text><path d="M26 18.500h5" stroke="#fff"/></svg></div>
<div class="tb run"><svg width="49" height="40"><path d="M18 9h19v6H18z" fill="#41a5ee"/><path d="M18 15h19v5H18z" fill="#2b7cd3"/><path d="M18 20h19v5H18z" fill="#185abd"/><path d="M18 25h19v6H18z" fill="#103f91"/><path d="M13 14h12v12H13z" fill="#1a58bd"/><text x="19" y="24" font-size="10" font-weight="700" text-anchor="middle" fill="#fff">W</text></svg></div>
<div class="tb run"><svg width="49" height="40"><rect x="14" y="9" width="21" height="21" rx="4" fill="#330000"/><text x="24.500" y="24" font-size="12" font-weight="700" text-anchor="middle" fill="#ff9a00">Ai</text></svg></div>
<div class="tb run"><svg width="49" height="40"><path d="M14 9h22v22H14z" fill="#25a4e8"/><path d="M23 24l7-7 6 5v9h-7z" fill="#6f86dc"/><path d="M14 23l7-6q2 0 14 14H14z" fill="#124c8e"/><circle cx="29" cy="14" r="2" fill="#fff"/></svg></div>
<div class="tray ms-auto d-flex align-items-center">
<svg width="21" height="22" viewBox="0 0 21 22"><circle cx="10" cy="10" r="9" fill="url(#sun)"/><path d="M1 16q1-4 5-3 3-4 7-1 5-1 7 3-2 1-6 0-7 2-13 1z" fill="#d8c4ae"/><path d="M3 18q8-3 15-1-6 3-15 1z" fill="#f0d8b8"/></svg>
<span class="temp text-nowrap">10°C</span><span class="sky">Bruma</span>
<svg width="160" height="40" viewBox="1048 728 160 40"><g fill="none" stroke="#fff" stroke-width="1.200"><path d="M1057 751l6-6 6 6"/><path d="M1092.500 745.500h9v7h-9zM1103 747.500v3M1087 743.500h5v2.500q-2.500 3-5 0zM1088 741v2m3-2v2M1089.500 748v3h2"/><path d="M1094 747h6v4h-6z" fill="#fff"/><path d="M1151 746h3l4-4v12l-4-4h-3zM1160.500 745q2 3 0 6M1163 743q3 5 0 10"/><path d="M1165.500 741.500q4 6.500 0 13" opacity=".4"/><path d="M1187 755q0-9 11-11M1190 755q1-6 8-8M1193 755q1-4 5-5" stroke="#ccc"/></g><circle cx="1197" cy="753.500" r="1.500" fill="#fff"/><path d="M1120 754.500l6.500-13h4l4 13h-4.500l-1.500-3.500-3.500-.500-1.500 4z" fill="#fff"/><path d="M1125.500 748.500l2-2.500 1 3z" fill="#28251f"/></svg>
<span class="lang">ESP</span>
<div class="clock text-center">23:06<br>01-09-2021</div>
<svg width="34" height="40"><path d="M9 12h16v13H14l-3 3v-3H9z" fill="#fff"/><path d="M12 15.500h10M12 18.500h10M12 21.500h6" stroke="#2d291f"/><circle cx="22" cy="24" r="3.500" fill="#2d291f" stroke="#fff"/><path d="M20 26l4-4" stroke="#fff"/></svg>
<svg class="peek" width="2" height="40"><path d="M.500 0v40" stroke="#777"/></svg>
</div>
</footer>
<script src="https://cdn.jsdelivr.net/npm/bootstrap@5.3.0/dist/js/bootstrap.bundle.min.js"></script>
<script>
// Ground plane: u runs along the red axis, v along the green one, five minor cells to a major cell.
const o=[856.2,284.2],u=[96.3,24],v=[-34.35,67];
const at=(a,b)=>(o[0]+a*u[0]+b*v[0]).toFixed(2)+' '+(o[1]+a*u[1]+b*v[1]).toFixed(2);
let minor='',major='';
for(let k=-75;k<=75;k++){
  const t=k/5,s=`M${at(t,-15)}L${at(t,15)}M${at(-15,t)}L${at(15,t)}`;
  if(k%5)minor+=s;else if(k)major+=s;
}
const set=(id,d)=>document.getElementById(id).setAttribute('d',d);
set('minor',minor);set('major',major);set('ghost',minor);
set('axis-x',`M${at(-15,0)}L${at(15,0)}`);set('axis-y',`M${at(0,-15)}L${at(0,15)}`);
</script>
</body>
</html>
